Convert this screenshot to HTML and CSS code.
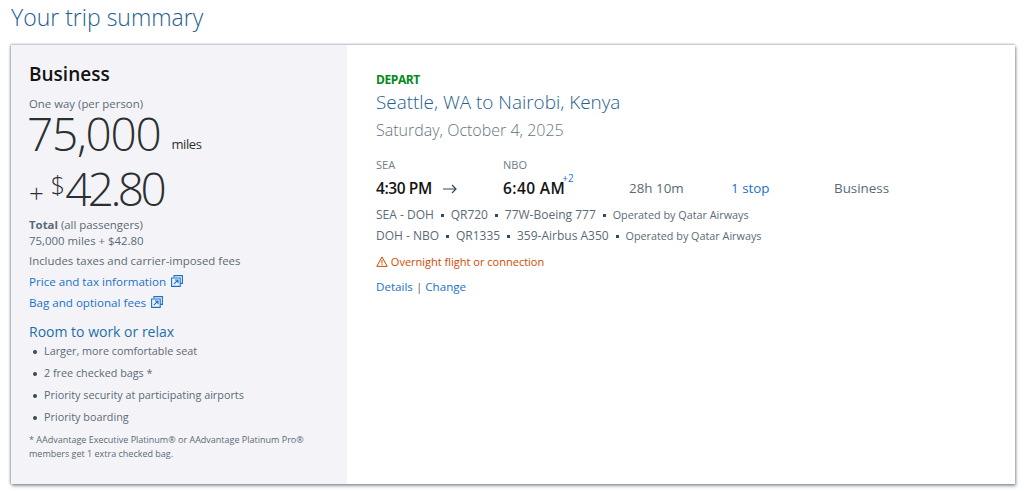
FILE: index.html
```html
<!DOCTYPE html>
<html lang="en">
<head>
    <meta charset="UTF-8">
    <meta name="viewport" content="width=device-width, initial-scale=1.0">
    <title>Your trip summary</title>
    <link rel="stylesheet" href="styles.css">
</head>
<body>
    <h1 class="page-title">Your trip summary</h1>

    <div class="card">
        <!-- Price panel -->
        <div class="price-panel">
            <h2 class="cabin">Business</h2>
            <p class="per-person">One way (per person)</p>
            <div class="miles"><span class="big-num">75,000</span><span class="miles-label">miles</span></div>
            <div class="cash"><span class="plus">+</span><span class="dollar">$</span><span class="big-num amount">42.80</span></div>
            <p class="total"><b>Total</b> (all passengers)</p>
            <p class="total-value">75,000 miles + $42.80</p>
            <p class="includes">Includes taxes and carrier-imposed fees</p>
            <a class="info-link" href="#">Price and tax information
                <svg class="popup-icon" viewBox="0 0 12 12" width="12" height="12" fill="none" stroke="currentColor" stroke-width="1.1">
                    <path d="M3 2.5V.6h8.4v7.8H9.2"/>
                    <path d="M.6 3h8.6v8.4H.6z"/>
                    <path d="M2.8 9.2l3.8-3.8M3.8 5h3.2v3.2"/>
                </svg>
            </a>
            <a class="info-link" href="#">Bag and optional fees
                <svg class="popup-icon" viewBox="0 0 12 12" width="12" height="12" fill="none" stroke="currentColor" stroke-width="1.1">
                    <path d="M3 2.5V.6h8.4v7.8H9.2"/>
                    <path d="M.6 3h8.6v8.4H.6z"/>
                    <path d="M2.8 9.2l3.8-3.8M3.8 5h3.2v3.2"/>
                </svg>
            </a>
            <h3 class="perks-title">Room to work or relax</h3>
            <ul class="perks">
                <li>Larger, more comfortable seat</li>
                <li>2 free checked bags *</li>
                <li>Priority security at participating airports</li>
                <li>Priority boarding</li>
            </ul>
            <p class="footnote">* AAdvantage Executive Platinum® or AAdvantage Platinum Pro® members get 1 extra checked bag.</p>
        </div>

        <!-- Flight details -->
        <div class="flight-panel">
            <div class="depart">DEPART</div>
            <div class="route">Seattle, WA to Nairobi, Kenya</div>
            <div class="date">Saturday, October 4, 2025</div>

            <div class="times">
                <div class="time-col from">
                    <div class="airport">SEA</div>
                    <div class="time">4:30 PM
                        <svg class="arrow" viewBox="0 0 14 10" width="14" height="10" fill="none" stroke="#36495a" stroke-width="1.2">
                            <path d="M0 5h13M9 1l4 4-4 4"/>
                        </svg>
                    </div>
                </div>
                <div class="time-col to">
                    <div class="airport">NBO</div>
                    <div class="time">6:40 AM<sup class="days">+2</sup></div>
                </div>
                <div class="duration">28h 10m</div>
                <a class="stops" href="#">1 stop</a>
                <div class="cabin-name">Business</div>
            </div>

            <div class="segment">SEA - DOH <i class="dot"></i> QR720 <i class="dot"></i> 77W-Boeing 777 <i class="dot"></i> <span class="operated">Operated by Qatar Airways</span></div>
            <div class="segment">DOH - NBO <i class="dot"></i> QR1335 <i class="dot"></i> 359-Airbus A350 <i class="dot"></i> <span class="operated">Operated by Qatar Airways</span></div>

            <div class="warning">
                <svg viewBox="0 0 12 11" width="12" height="11" fill="none" stroke="#d14900" stroke-width="1">
                    <path d="M6 .9L.8 10.4h10.4z"/>
                    <path d="M6 4v3.6M6 8.2v1"/>
                </svg>
                Overnight flight or connection
            </div>

            <div class="actions"><a href="#">Details</a> | <a href="#">Change</a></div>
        </div>
    </div>
</body>
</html>
```

FILE: styles.css
```css
/* Global Styles */
* {
    box-sizing: border-box;
    font-family: 'Open Sans', 'Noto Sans', sans-serif;
}

body {
    margin: 0;
    padding: 0 9px 7px 11px;
    background: white;
    color: #5b6a76;
}

p, h1, h2, h3, ul {
    margin: 0;
    font-weight: normal;
}

a {
    color: #1a72c9;
    text-decoration: none;
}

.page-title {
    height: 45px;
    padding-top: 1px;
    font-size: 23px;
    line-height: 32px;
    font-weight: 300;
    color: #1e6091;
}

.card {
    display: flex;
    height: 439px;
    background: white;
    box-shadow: -1px 0 2px rgba(100,115,130,0.5), 1px 2px 3px rgba(100,115,130,0.7), 0 -1px 2px rgba(100,115,130,0.3);
}

/* Price panel */
.price-panel {
    width: 336px;
    padding: 16px 10px 0 18px;
    background: #f4f4f8;
    font-size: 11.4px;
}

.cabin {
    font-size: 19px;
    line-height: 26px;
    font-weight: 600;
    color: #131313;
}

.per-person {
    margin-top: 8px;
    line-height: 17px;
}

.miles {
    height: 46px;
    margin-left: -2px;
    color: #2b3033;
}

.big-num {
    display: inline-block;
    font-size: 46px;
    line-height: 42px;
    font-weight: 300;
    letter-spacing: -1.3px;
}

.amount {
    letter-spacing: -3.6px;
}

.miles-label {
    margin-left: 11px;
    font-size: 13px;
    line-height: 1;
    letter-spacing: -0.4px;
    vertical-align: 2px;
}

.cash {
    height: 45px;
    margin-top: 9px;
    color: #2b3033;
}

.plus {
    font-size: 26px;
    line-height: 1;
    font-weight: 300;
    margin-right: 7px;
    vertical-align: 3px;
}

.dollar {
    font-size: 25px;
    line-height: 1;
    font-weight: 300;
    vertical-align: 12px;
}

.total {
    margin-top: 5px;
    line-height: 16px;
}

.total-value {
    line-height: 16px;
}

.includes {
    margin-top: 3px;
    line-height: 17px;
}

.info-link {
    display: block;
    margin-top: 4px;
    line-height: 18px;
    font-size: 11.6px;
}

.info-link + .info-link {
    margin-top: 3px;
}

.popup-icon {
    margin-left: 2px;
    vertical-align: -1px;
}

.perks-title {
    margin-top: 11px;
    font-size: 14px;
    line-height: 18px;
    color: #1e6fa8;
}

.perks {
    padding-left: 15px;
    list-style: none;
}

.perks li {
    height: 22px;
    line-height: 20px;
    font-size: 10.8px;
    position: relative;
}

.perks li::before {
    content: "";
    position: absolute;
    left: -11px;
    top: 9px;
    width: 4px;
    height: 4px;
    border-radius: 50%;
    background: #36495a;
}

.footnote {
    margin-top: 4px;
    width: 300px;
    font-size: 9px;
    line-height: 14px;
}

/* Flight details */
.flight-panel {
    flex: 1;
    padding: 27px 20px 0 29px;
    font-size: 11.6px;
}

.depart {
    font-size: 12px;
    line-height: 16px;
    font-weight: 700;
    letter-spacing: -0.4px;
    color: #008a20;
}

.route {
    margin-top: 2px;
    font-size: 18.9px;
    line-height: 25px;
    font-weight: 300;
    color: #1e6091;
}

.date {
    margin-top: 4px;
    font-size: 16px;
    line-height: 22px;
    font-weight: 300;
    color: #66747f;
}

.times {
    display: flex;
    align-items: flex-end;
    margin-top: 17px;
}

.time-col {
    width: 127px;
}

.time-col.to {
    width: 126px;
}

.airport {
    font-size: 11px;
    line-height: 14px;
    color: #6e7d88;
}

.time {
    margin-top: 6px;
    font-size: 15.5px;
    line-height: 20px;
    font-weight: 600;
    letter-spacing: -0.4px;
    color: #131313;
}

.to .time {
    letter-spacing: 0.4px;
}

.arrow {
    margin-left: 7px;
}

.days {
    position: absolute;
    margin: -6px 0 0 -3px;
    font-size: 10px;
    line-height: 12px;
    font-weight: normal;
    letter-spacing: 0;
    color: #1a72c9;
}

.duration, .stops, .cabin-name {
    font-size: 13.4px;
    line-height: 20px;
}

.duration {
    width: 102px;
}

.stops {
    width: 103px;
}

.segment {
    font-size: 12px;
    line-height: 16px;
    margin-top: 5px;
    white-space: nowrap;
}

.times + .segment {
    margin-top: 9px;
}

.operated {
    font-size: 10.8px;
}

.dot {
    display: inline-block;
    width: 3px;
    height: 3px;
    margin: 0 3.8px;
    vertical-align: 2px;
    background: #36495a;
}

.warning {
    margin-top: 10px;
    font-size: 11px;
    line-height: 16px;
    color: #d14900;
}

.warning svg {
    vertical-align: -1px;
}

.actions {
    margin-top: 8px;
    line-height: 17px;
}
```
